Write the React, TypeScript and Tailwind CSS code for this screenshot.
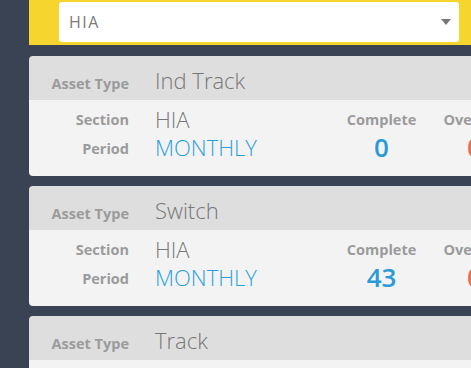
import React from "react";

type Item = { type: string; section: string; period: string; complete: string; overdue: string };

const items: Item[] = [
  { type: "Ind Track", section: "HIA", period: "MONTHLY", complete: "0", overdue: "0" },
  { type: "Switch", section: "HIA", period: "MONTHLY", complete: "43", overdue: "0" },
  { type: "Track", section: "HIA", period: "MONTHLY", complete: "0", overdue: "0" },
];

const label = "text-[14.5px] font-bold text-[#9b9b9b] [font-family:'Open_Sans',sans-serif]";
const value = "text-[22px] font-light text-[#777777] [font-family:'Open_Sans',sans-serif]";

function Card({ it }: { it: Item }) {
  return (
    <div className="w-[560px] shrink-0 rounded-[4px] overflow-hidden">
      <div className="h-[44px] bg-[#dedede] flex items-baseline pt-[10px]">
        <div className={`w-[100px] text-right ${label}`}>Asset Type</div>
        <div className={`ml-[26px] leading-[28px] ${value}`}>{it.type}</div>
      </div>
      <div className="h-[76px] bg-[#f3f3f4] flex pt-[5px]">
        <div className="w-[100px] flex flex-col items-end">
          <div className={`leading-[29px] ${label}`}>Section</div>
          <div className={`leading-[29px] ${label}`}>Period</div>
        </div>
        <div className="ml-[26px] w-[192px] flex flex-col">
          <div className={`leading-[28px] ${value}`}>{it.section}</div>
          <div className="leading-[29px] text-[22px] font-light text-[#2a9fdb] [font-family:'Open_Sans',sans-serif]">{it.period}</div>
        </div>
        <div className="w-[69px] flex flex-col items-center">
          <div className={`leading-[29px] ${label}`}>Complete</div>
          <div className="leading-[27px] text-[26px] font-semibold text-[#2a9bd6] [font-family:'Open_Sans',sans-serif]">{it.complete}</div>
        </div>
        <div className="ml-[28px] w-[61px] flex flex-col items-center">
          <div className={`leading-[29px] ${label}`}>Overdue</div>
          <div className="leading-[27px] text-[26px] font-semibold text-[#e0705a] [font-family:'Open_Sans',sans-serif]">{it.overdue}</div>
        </div>
      </div>
    </div>
  );
}

export default function App() {
  return (
    <div className="w-[471px] h-[368px] overflow-hidden bg-[#3a4354] flex">
      <div className="w-[29px] shrink-0" />
      <div className="flex flex-col shrink-0">
        <div className="w-[442px] h-[45px] shrink-0 bg-[#f6d52e] pl-[30px] pr-[12px] pt-[2px]">
          <div className="h-[40px] w-[400px] bg-white rounded-[3px] flex items-center pl-[10px] pr-[8px]">
            <span className="flex-1 text-[16px] tracking-[1.5px] text-[#7a7a7a] [font-family:'Open_Sans',sans-serif]">HIA</span>
            <svg width="10" height="6" viewBox="0 0 10 6">
              <path d="M0 0 L10 0 L5 6 Z" fill="#777" />
            </svg>
          </div>
        </div>
        <div className="flex flex-col shrink-0 gap-[10px] pt-[11px]">
          {items.map((it, i) => (
            <Card key={i} it={it} />
          ))}
        </div>
      </div>
    </div>
  );
}
